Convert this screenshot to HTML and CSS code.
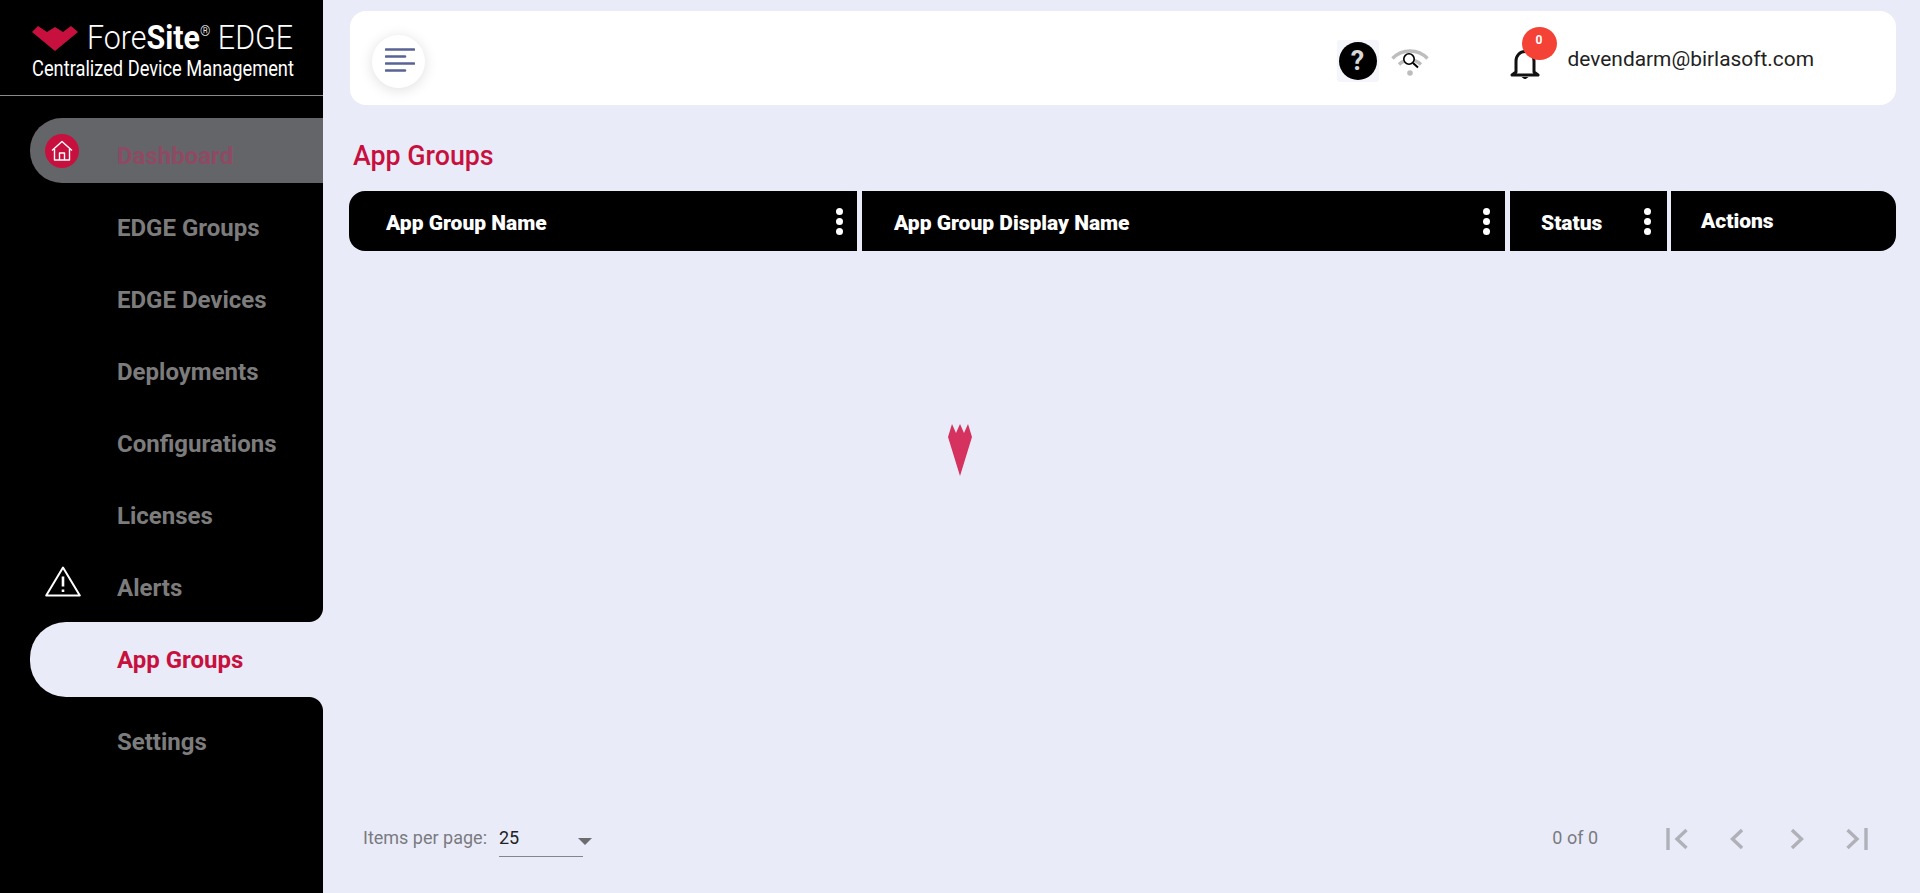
FILE: index.html
```html
<!DOCTYPE html>
<html lang="en">
<head>
<meta charset="utf-8">
<title>App Groups</title>
<link rel="stylesheet" href="styles.css">
</head>
<body>
<div class="app">
  <aside class="sidebar">
    <div class="brand">
      <div class="brand-top">
        <svg class="brand-mark" viewBox="0 0 46 25"><path fill="#c8103f" d="M0 6 6 0 15 6 23 1 31 6 39 0 46 6 23 25Z"/></svg>
        <span class="brand-name">Fore<b>Site</b><sup>®</sup> EDGE</span>
      </div>
      <div class="brand-sub">Centralized Device Management</div>
    </div>
    <nav class="nav">
      <a class="nav-item dash">
        <span class="slot"><span class="home"><svg viewBox="0 0 24 24" width="24" height="24" fill="none" stroke="#fff" stroke-width="1.4" stroke-linejoin="round"><path d="M2 11.500 12 2.500l10 9M4.500 10v11h15V10M9.500 21v-7h5v7"/></svg></span></span>
        <span class="label">Dashboard</span>
      </a>
      <a class="nav-item"><span class="slot"></span><span class="label">EDGE Groups</span></a>
      <a class="nav-item"><span class="slot"></span><span class="label">EDGE Devices</span></a>
      <a class="nav-item"><span class="slot"></span><span class="label">Deployments</span></a>
      <a class="nav-item"><span class="slot"></span><span class="label">Configurations</span></a>
      <a class="nav-item"><span class="slot"></span><span class="label">Licenses</span></a>
      <a class="nav-item">
        <span class="slot"><svg class="alert" viewBox="0 0 36 31" width="36" height="31" fill="none" stroke="#fff" stroke-width="2" stroke-linejoin="round"><path d="M18 1.500 34.800 29.500H1.200Z"/><path d="M18 10.500v10M18 23.500v2.600" stroke-width="2.600"/></svg></span>
        <span class="label">Alerts</span>
      </a>
      <a class="nav-item active"><span class="slot"></span><span class="label">App Groups</span></a>
      <a class="nav-item settings"><span class="slot"></span><span class="label">Settings</span></a>
    </nav>
  </aside>
  <main class="main">
    <header class="topbar">
      <button class="menu-btn">
        <svg viewBox="0 0 30 24" width="30" height="24" stroke="#5a6396" stroke-width="2.600" stroke-linecap="round"><path d="M1 1.500h28M1 8.500h19M1 15.500h28M1 22.500h19"/></svg>
      </button>
      <div class="top-tools">
        <span class="help"><span class="help-dot">?</span></span>
        <svg class="wifi" viewBox="0 0 38 29" width="38" height="29" fill="none">
          <path d="M1.500 11.500C11 1.500 27 1.500 36.500 11.500" stroke="#bdbdbd" stroke-width="3.400"/>
          <path d="M8 17.500c6-6 16-6 22 0" stroke="#bdbdbd" stroke-width="3.400"/>
          <circle cx="19" cy="26" r="2.800" fill="#bdbdbd"/>
          <circle cx="18" cy="12" r="5.200" stroke="#000" stroke-width="1.600" fill="#fff"/>
          <path d="M22 16l5 4.500" stroke="#000" stroke-width="2"/>
        </svg>
        <span class="bell-wrap">
          <svg viewBox="0 0 30 31" width="30" height="31" fill="none"><path d="M6 24V13C6 7.500 10 3.500 15 3.500S24 7.500 24 13V24L28 27H2Z" stroke="#111" stroke-width="3" stroke-linejoin="round"/><path d="M11.500 29h7l-3.500 2.500Z" fill="#111"/></svg>
          <span class="badge">0</span>
        </span>
        <span class="email">devendarm@birlasoft.com</span>
      </div>
    </header>
    <h1 class="page-title">App Groups</h1>
    <div class="table-head">
      <div class="col col-name"><span>App Group Name</span><i class="dots"></i></div>
      <div class="col col-display"><span>App Group Display Name</span><i class="dots"></i></div>
      <div class="col col-status"><span>Status</span><i class="dots"></i></div>
      <div class="col col-actions"><span>Actions</span></div>
    </div>
    <div class="table-body"></div>
    <footer class="pager">
      <div class="per-page">
        <span class="pp-label">Items per page:</span>
        <span class="pp-select"><span>25</span><i class="caret"></i></span>
      </div>
      <div class="range">
        <span class="range-text">0 of 0</span>
        <svg class="pg-ico first" viewBox="0 0 22 22" width="22" height="22" fill="none" stroke="#b0b1b8" stroke-width="3.400"><path d="M2 0v22M20.500 2 11 11l9.500 9"/></svg>
        <svg class="pg-ico prev" viewBox="0 0 13 22" width="13" height="22" fill="none" stroke="#b0b1b8" stroke-width="3.400"><path d="M12 2 2.500 11l9.500 9"/></svg>
        <svg class="pg-ico next" viewBox="0 0 13 22" width="13" height="22" fill="none" stroke="#b0b1b8" stroke-width="3.400"><path d="M1 2l9.500 9L1 20"/></svg>
        <svg class="pg-ico last" viewBox="0 0 22 22" width="22" height="22" fill="none" stroke="#b0b1b8" stroke-width="3.400"><path d="M20 0v22M1.500 2 11 11l-9.500 9"/></svg>
      </div>
    </footer>
  </main>
  <svg class="spinner" viewBox="0 0 24 52" width="24" height="52"><path fill="#d6325f" d="M0 13 4 0 8 9 12 0 16 9 20 0 24 13 12 52Z"/></svg>
</div>
</body>
</html>
```
FILE: styles.css
```css
* { box-sizing: border-box; }
html, body { margin: 0; height: 100%; }
body { font-family: Roboto, "Liberation Sans", sans-serif; background: #e9ecf8; color: #222; overflow: hidden; }
.app { display: flex; height: 893px; }

.sidebar { width: 323px; flex: none; background: #000; display: flex; flex-direction: column; }
.brand { height: 96px; border-bottom: 1px solid #8a8a8a; padding: 21px 0 0 32px; color: #fff; overflow: hidden; }
.brand-top { display: flex; align-items: center; height: 34px; }
.brand-mark { width: 46px; height: 25px; flex: none; }
.brand-name { display: inline-block; font-size: 32.500px; font-weight: 300; margin-left: 9px; line-height: 34px; white-space: nowrap; transform: scaleX(.935); transform-origin: 0 50%; }
.brand-name b { font-weight: 700; }
.brand-name sup { font-size: 14px; line-height: 0; vertical-align: 13px; }
.brand-sub { font-size: 22px; line-height: 24px; margin-top: 2px; white-space: nowrap; transform: scaleX(.83); transform-origin: 0 50%; }

.nav { display: flex; flex-direction: column; padding: 22px 0 0 30px; }
.nav-item { display: flex; align-items: center; height: 72px; color: #7c7c7c; font-size: 24px; font-weight: 700; }
.slot { width: 87px; flex: none; padding-left: 15px; display: flex; align-items: center; }
.label { white-space: nowrap; }
.nav-item.dash { height: 65px; margin-bottom: 9px; background: #646569; border-radius: 32px 0 0 32px; color: #8f4a63; }
.dash .label { padding-top: 10px; }
.home { width: 34px; height: 34px; border-radius: 50%; background: #c8103f; display: flex; align-items: center; justify-content: center; }
.alert { margin-top: -14px; }
.nav-item.active { position: relative; height: 75px; margin-top: -2px; background: #e9ecf8; color: #c8103f; border-radius: 36px 0 0 36px; }
.nav-item.active::before, .nav-item.active::after { content: ""; position: absolute; right: 0; width: 14px; height: 14px; }
.nav-item.active::before { top: -14px; background: radial-gradient(circle at 0 0, #000 13.500px, #e9ecf8 14.500px); }
.nav-item.active::after { bottom: -14px; background: radial-gradient(circle at 0 100%, #000 13.500px, #e9ecf8 14.500px); }
.nav-item.settings { height: 90px; }

.main { flex: 1; min-width: 0; padding: 11px 24px 0 26px; display: flex; flex-direction: column; }
.topbar { height: 94px; margin-left: 1px; background: #fff; border-radius: 16px; display: flex; align-items: center; justify-content: space-between; padding: 6px 82px 0 22px; flex: none; }
.menu-btn { width: 53px; height: 53px; border: 0; border-radius: 50%; background: #fff; box-shadow: 0 2px 14px rgba(0,0,0,.13); display: flex; align-items: center; justify-content: center; padding: 0 0 2px 3px; }
.top-tools { display: flex; align-items: center; }
.help { width: 42px; height: 42px; background: #f4f6fb; border-radius: 3px; display: flex; align-items: center; justify-content: center; }
.help-dot { width: 38px; height: 38px; border-radius: 50%; background: #000; color: #d8d8d8; font-size: 27px; font-weight: 700; line-height: 38px; text-align: center; }
.wifi { margin-left: 12px; }
.bell-wrap { position: relative; display: flex; width: 30px; height: 31px; margin-left: 81px; margin-top: 4px; }
.badge { position: absolute; left: 12px; top: -21px; width: 35px; height: 33px; border-radius: 50%; background: #f44336; color: #fff; font-size: 12px; font-weight: 700; line-height: 27px; text-align: center; }
.email { margin-left: 28px; font-size: 20.900px; margin-top: -4px; color: #222; white-space: nowrap; }

.page-title { margin: 35px 0 0 4px; height: 51px; font-size: 26.800px; line-height: 32px; font-weight: 500; color: #c8103f; flex: none; }
.table-head { display: flex; height: 60px; flex: none; }
.col { background: #000; color: #fff; display: flex; align-items: center; justify-content: space-between; font-size: 21px; font-weight: 900; position: relative; }
.col > span { padding-top: 3px; }
.col-name { width: 508px; border-radius: 16px 0 0 16px; padding: 0 14px 0 37px; }
.col-display { width: 643px; margin-left: 5px; padding: 0 15px 0 32px; }
.col-status { width: 157px; margin-left: 5px; padding: 0 16px 0 31px; }
.col-actions { flex: 1; margin-left: 4px; border-radius: 0 16px 16px 0; padding: 0 0 4px 30px; }
.dots, .dots::before, .dots::after { display: block; width: 7px; height: 7px; border-radius: 50%; background: #fff; }
.dots { position: relative; }
.dots::before, .dots::after { content: ""; position: absolute; left: 0; }
.dots::before { top: -10px; }
.dots::after { top: 10px; }
.table-body { flex: 1; }

.pager { height: 110px; flex: none; display: flex; justify-content: space-between; padding: 43px 28px 0 14px; }
.per-page { display: flex; align-items: flex-start; font-size: 18px; }
.pp-label { color: #7a7a80; line-height: 24px; }
.pp-select { width: 84px; height: 31px; margin-left: 12px; border-bottom: 1.500px solid #85858a; color: #222; line-height: 24px; position: relative; }
.caret { position: absolute; right: -9px; top: 12px; border: 7px solid transparent; border-top: 7px solid #6b6b70; border-bottom: 0; }
.range { display: flex; align-items: flex-start; }
.range-text { color: #7a7a80; font-size: 18px; line-height: 24px; margin-right: 68px; }
.pg-ico { margin-top: 2px; }
.pg-ico.prev { margin-left: 42px; }
.pg-ico.next { margin-left: 48px; }
.pg-ico.last { margin-left: 42px; }
.spinner { position: absolute; left: 948px; top: 424px; }
```
